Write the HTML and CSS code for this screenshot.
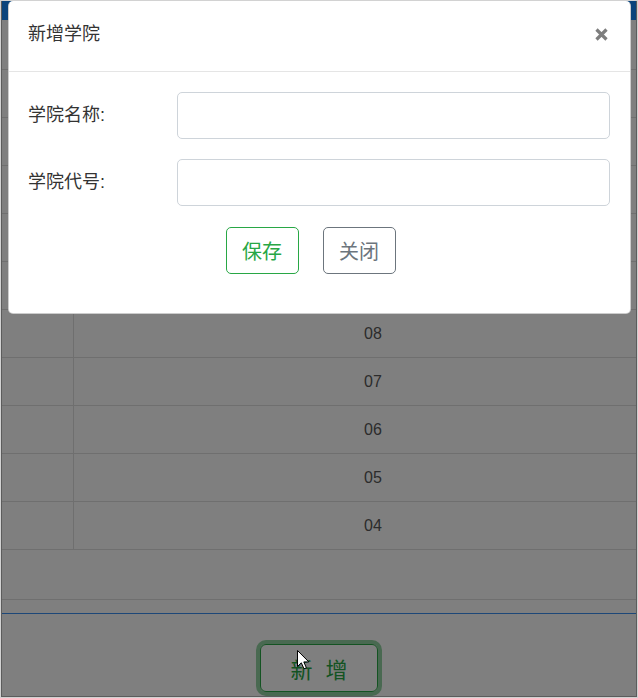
FILE: index.html
```html
<!DOCTYPE html>
<html lang="zh-CN">
<head>
<meta charset="utf-8">
<title>学院管理</title>
<link rel="stylesheet" href="styles.css">
</head>
<body>
<div class="frame">
  <div class="page">
    <div class="topbar"></div>
    <div class="table-wrap">
      <div class="row head"><div class="c1"></div><div class="c2"></div></div>
      <div class="row"><div class="c1"></div><div class="c2"></div></div>
      <div class="row"><div class="c1"></div><div class="c2"></div></div>
      <div class="row"><div class="c1"></div><div class="c2"></div></div>
      <div class="row"><div class="c1"></div><div class="c2"></div></div>
      <div class="row"><div class="c1"></div><div class="c2"></div></div>
      <div class="row"><div class="c1"></div><div class="c2">08</div></div>
      <div class="row"><div class="c1"></div><div class="c2">07</div></div>
      <div class="row"><div class="c1"></div><div class="c2">06</div></div>
      <div class="row"><div class="c1"></div><div class="c2">05</div></div>
      <div class="row"><div class="c1"></div><div class="c2">04</div></div>
      <div class="pager"></div>
    </div>
    <div class="footer"><button class="btn-add" type="button">新 增</button></div>
  </div>

  <div class="backdrop">
    <div class="modal">
      <div class="modal-header">
        <h4 class="modal-title">新增学院</h4>
        <button class="close" type="button" aria-label="关闭">
          <svg width="13" height="13" viewBox="0 0 13 13"><path d="M1.5 1.5 L11.5 11.5 M11.5 1.5 L1.5 11.5" stroke="#000" stroke-width="3.2" fill="none"/></svg>
        </button>
      </div>
      <div class="modal-body">
        <div class="form-row">
          <label class="label">学院名称:</label>
          <input class="input" type="text">
        </div>
        <div class="form-row">
          <label class="label">学院代号:</label>
          <input class="input" type="text">
        </div>
        <div class="actions">
          <button class="btn btn-save" type="button">保存</button>
          <button class="btn btn-close" type="button">关闭</button>
        </div>
      </div>
    </div>
  </div>

  <svg class="cursor" width="13" height="20" viewBox="0 0 13 20"><path d="M0.5 0.5 L0.5 16.5 L4.3 12.8 L7 18.8 L9.4 17.8 L6.8 11.9 L11.8 11.9 Z" fill="#fff" stroke="#000" stroke-width="1" stroke-linejoin="miter"/></svg>
</div>
</body>
</html>
```

FILE: styles.css
```css
html, body {
  margin: 0;
  padding: 0;
  background: #fff;
}

body {
  font-family: "Liberation Sans", "Noto Sans CJK SC", sans-serif;
  color: #333;
}

.frame {
  position: relative;
  width: 638px;
  height: 698px;
  box-sizing: border-box;
  border: 1px solid #d2d2d2;
  overflow: hidden;
}

.page {
  height: 100%;
  box-sizing: border-box;
  border: 1px solid #b8b8b8;
  border-top: 0;
  display: flex;
  flex-direction: column;
  background: #fff;
}

.topbar {
  height: 19px;
  background: #1688f8;
  flex: none;
}

.table-wrap {
  overflow: hidden;
  flex: none;
  margin-bottom: 13px;
}

.row {
  display: grid;
  grid-template-columns: 72px 598px;
  height: 48px;
  box-sizing: border-box;
  border-bottom: 1px solid #dedede;
  font-size: 16px;
  color: #585858;
}

.row.head {
  height: 50px;
  font-weight: bold;
}

.c1 {
  border-right: 1px solid #dedede;
}

.c1, .c2 {
  display: flex;
  align-items: center;
  justify-content: center;
}

.pager {
  height: 50px;
  box-sizing: border-box;
  border-bottom: 1px solid #dedede;
}

.footer {
  flex: 1;
  border-top: 1px solid #3a8ff0;
  padding-top: 30px;
  display: flex;
  justify-content: center;
  align-items: flex-start;
}

.btn-add {
  width: 118px;
  height: 48px;
  box-sizing: border-box;
  border: 1px solid #28a745;
  border-radius: 6px;
  background: transparent;
  color: #28a745;
  font-family: "Liberation Sans", "Noto Sans CJK SC", sans-serif;
  font-size: 22px;
  word-spacing: 7px;
  box-shadow: 0 0 0 4px rgba(40, 167, 69, 0.5);
  padding: 0;
}

.backdrop {
  position: absolute;
  inset: 0;
  background: rgba(0, 0, 0, 0.5);
}

.modal {
  margin-left: 7px;
  width: 623px;
  box-sizing: border-box;
  background: #fff;
  border: 1px solid rgba(0, 0, 0, 0.2);
  border-top-color: #fff;
  border-radius: 5px;
}

.modal-header {
  display: flex;
  align-items: center;
  justify-content: space-between;
  padding: 20px 22px 25px 19px;
  border-bottom: 1px solid #e5e5e5;
}

.modal-title {
  margin: 0;
  font-size: 18px;
  line-height: 24px;
  font-weight: normal;
  color: #333;
}

.close {
  border: 0;
  background: transparent;
  padding: 0;
  width: 13px;
  height: 13px;
  opacity: 0.5;
  display: flex;
}

.modal-body {
  padding: 20px 20px 39px 19px;
}

.form-row {
  display: grid;
  grid-template-columns: 149px 1fr;
  align-items: center;
  margin-bottom: 20px;
}

.label {
  font-size: 18px;
  color: #333;
  padding-bottom: 6px;
}

.input {
  height: 47px;
  box-sizing: border-box;
  border: 1px solid #ced4da;
  border-radius: 5px;
  padding: 0 12px;
  font-size: 16px;
  outline: none;
}

.actions {
  display: flex;
  justify-content: center;
  gap: 24px;
  padding-right: 17px;
  margin-top: 21px;
}

.btn {
  width: 73px;
  height: 47px;
  box-sizing: border-box;
  border-radius: 5px;
  background: #fff;
  font-family: "Liberation Sans", "Noto Sans CJK SC", sans-serif;
  font-size: 20px;
  padding: 0;
}

.btn-save {
  border: 1px solid #28a745;
  color: #28a745;
}

.btn-close {
  border: 1px solid #6c757d;
  color: #6c757d;
}

.cursor {
  position: absolute;
  left: 296px;
  top: 649px;
}
```
